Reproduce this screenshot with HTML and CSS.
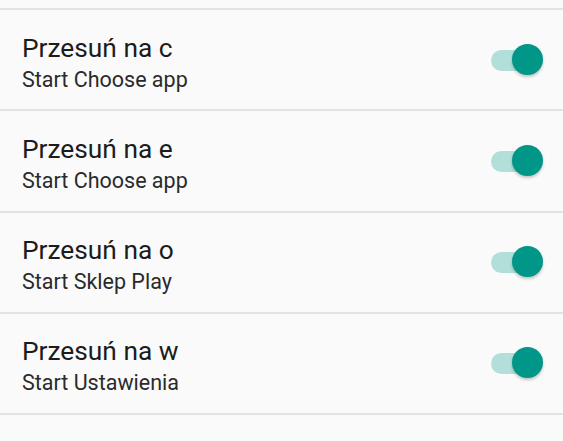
FILE: index.html
```html
<!DOCTYPE html>
<html lang="pl">
<head>
  <meta charset="UTF-8" />
  <meta name="viewport" content="width=device-width, initial-scale=1.0"/>
  <title>Gesty</title>
  <link rel="stylesheet" href="styles.css">
</head>
<body>

  <section class="prefs">
    <div class="pref">
      <div class="pref-text">
        <div class="pref-title">Przesuń na c</div>
        <div class="pref-summary">Start Choose app</div>
      </div>
      <div class="switch on"><span class="track"></span><span class="thumb"></span></div>
    </div>

    <div class="pref">
      <div class="pref-text">
        <div class="pref-title">Przesuń na e</div>
        <div class="pref-summary">Start Choose app</div>
      </div>
      <div class="switch on"><span class="track"></span><span class="thumb"></span></div>
    </div>

    <div class="pref">
      <div class="pref-text">
        <div class="pref-title">Przesuń na o</div>
        <div class="pref-summary">Start Sklep Play</div>
      </div>
      <div class="switch on"><span class="track"></span><span class="thumb"></span></div>
    </div>

    <div class="pref">
      <div class="pref-text">
        <div class="pref-title">Przesuń na w</div>
        <div class="pref-summary">Start Ustawienia</div>
      </div>
      <div class="switch on"><span class="track"></span><span class="thumb"></span></div>
    </div>
  </section>

</body>
</html>
```

FILE: styles.css
```css
body {
  margin: 0;
  background: #fafafa;
  font-family: Roboto, 'Noto Sans', sans-serif;
  color: #212121;
}

.prefs {
  padding-top: 8px;
}

.pref {
  display: flex;
  align-items: center;
  justify-content: space-between;
  height: 99.25px;
  padding: 0 20px 0 22px;
  border-top: 2px solid #e3e3e3;
}

.pref:last-child {
  border-bottom: 2px solid #e3e3e3;
}

.pref-text {
  padding-top: 4px;
}

.pref-title {
  font-size: 26.3px;
  line-height: 34px;
  color: #1c1c1c;
}

.pref-summary {
  font-size: 21.5px;
  line-height: 26px;
  color: #2a2a2a;
  margin-top: 2px;
}

.switch {
  position: relative;
  width: 52px;
  height: 32px;
}

.switch .track {
  position: absolute;
  left: 0;
  top: 6px;
  width: 48px;
  height: 21px;
  border-radius: 11px;
  background: #b3dfda;
}

.switch .thumb {
  position: absolute;
  right: 0;
  top: 0;
  width: 31px;
  height: 31px;
  border-radius: 50%;
  background: #009688;
  box-shadow: 0 2px 3px rgba(0,0,0,0.22);
}
```
